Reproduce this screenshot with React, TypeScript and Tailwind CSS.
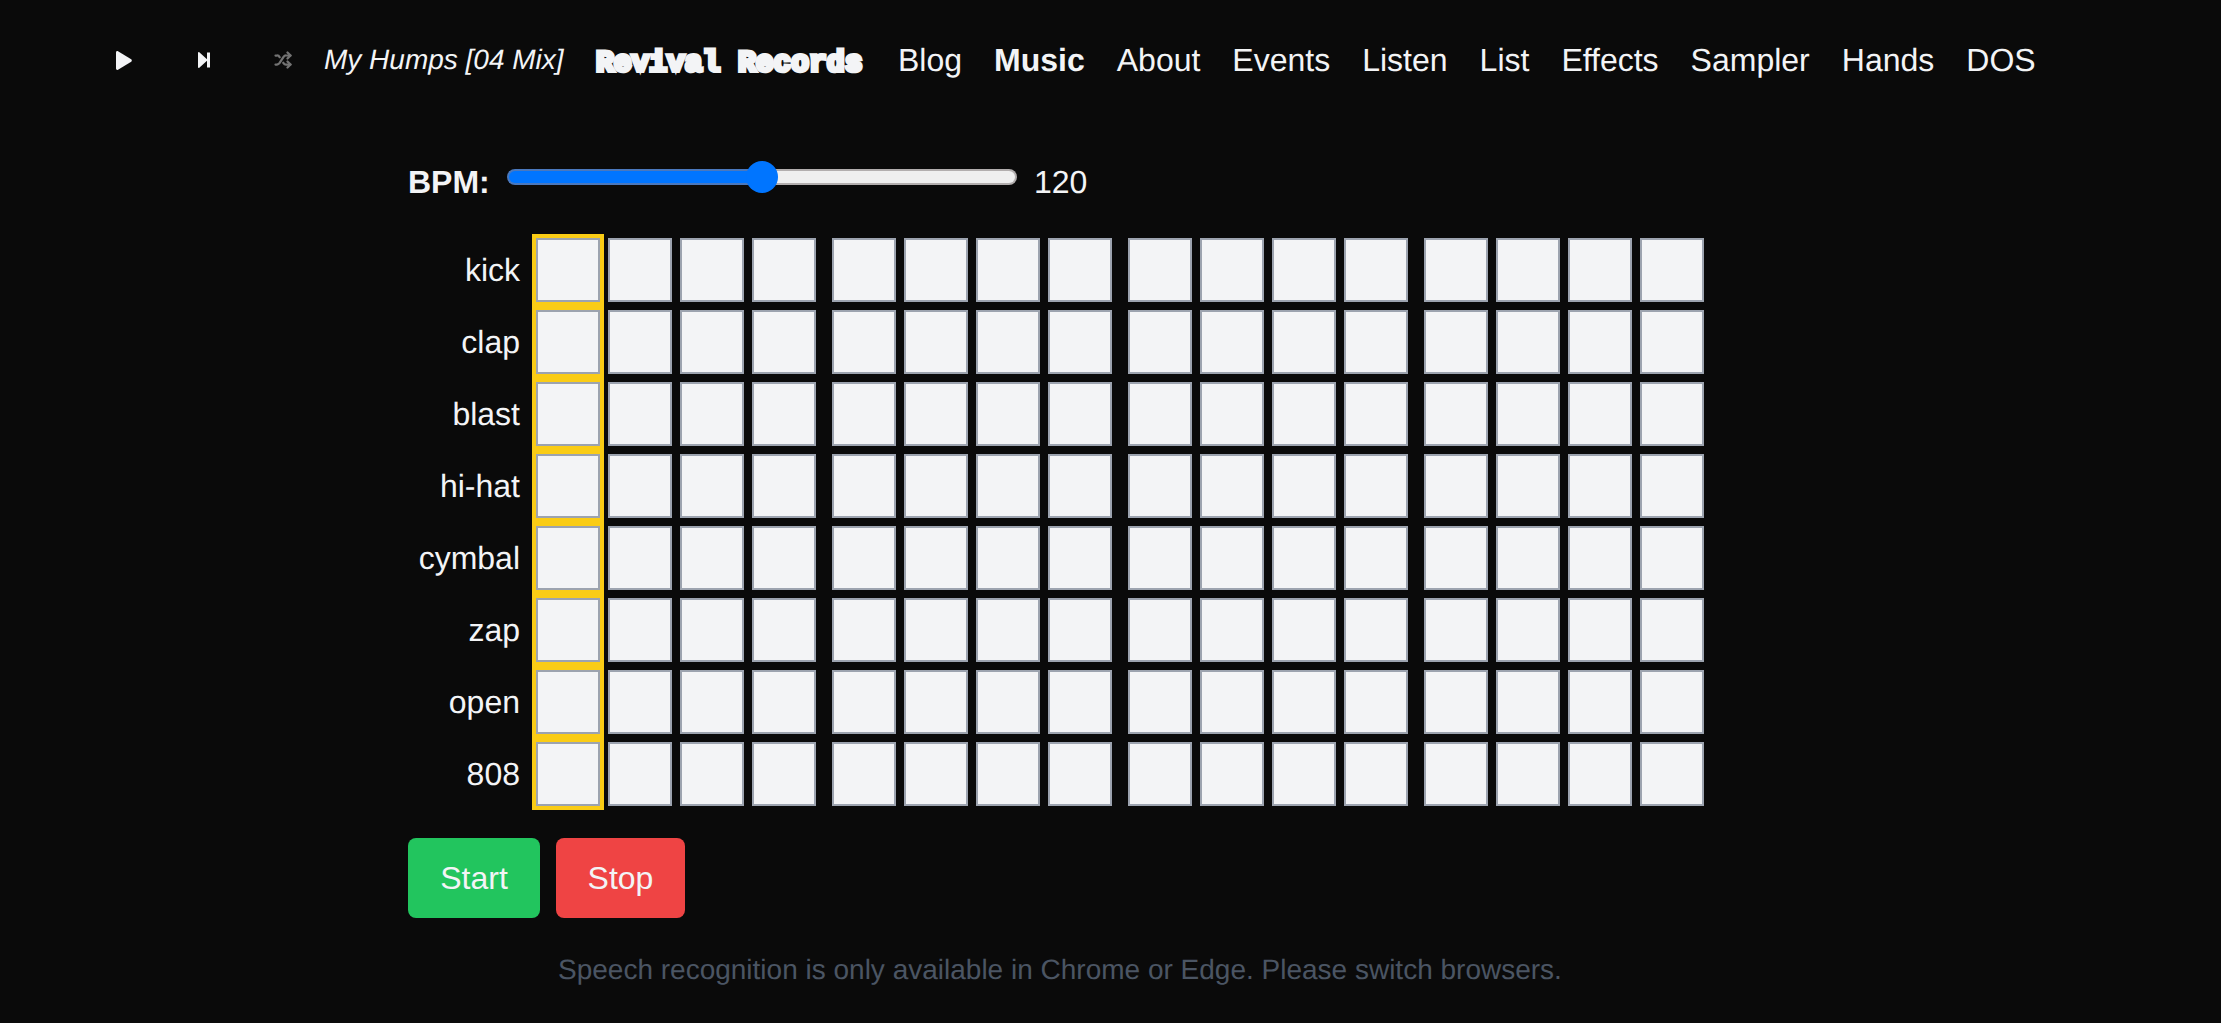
import { Shuffle } from "lucide-react";

const rows = ["kick", "clap", "blast", "hi-hat", "cymbal", "zap", "open", "808"];
const steps = Array.from({ length: 16 }, (_, i) => i);
const links = ["Blog", "Music", "About", "Events", "Listen", "List", "Effects", "Sampler", "Hands", "DOS"];

export default function App() {
  return (
    <div className="min-h-[1023px] bg-[#0a0a0a] text-[#f3f4f6] font-['Liberation_Sans',sans-serif] text-[32px] leading-[48px] [text-rendering:geometricPrecision]">
      <nav className="flex items-center h-[120px] pl-[112px]">
        <button className="flex justify-center w-[24px]">
          <svg viewBox="0 0 16 19" className="w-[16px] h-[19px]" fill="currentColor">
            <path d="M0 1.4C0 .4 1 -.3 2 .3L15.2 8.3C16 8.8 16 10.2 15.2 10.7L2 18.7C1 19.3 0 18.6 0 17.6Z" />
          </svg>
        </button>
        <button className="flex justify-center w-[20px] ml-[58px]">
          <svg viewBox="0 0 12 16" className="w-[12px] h-[16px]" fill="currentColor">
            <path d="M0 1C0 .2.7 -.2 1.3.3L9 7.3V.5H12V15.5H9V8.7L1.3 15.7C.7 16.2 0 15.8 0 15Z" />
          </svg>
        </button>
        <button className="flex justify-center w-[20px] ml-[59px] text-[#737373]">
          <Shuffle className="w-[18px] h-[18px]" strokeWidth={3} />
        </button>
        <span className="ml-[31px] italic font-light text-[28px] w-[240px] whitespace-nowrap">My Humps [04 Mix]</span>
        <span className="ml-[32px] w-[267px] whitespace-nowrap font-['Liberation_Mono'] font-bold text-[29.6px] relative top-[3px] [-webkit-text-stroke:4px_#f3f4f6]">Revival Records</span>
        <div className="flex gap-[32px] ml-[35px]">
          {links.map((l) => (
            <a key={l} className={l === "Music" ? "font-bold" : ""}>{l}</a>
          ))}
        </div>
      </nav>
      <main className="pl-[408px]">
        <div className="flex items-center mt-[38px] h-[32px]">
          <label className="font-bold w-[99px] relative top-[8px]">BPM:</label>
          <div className="flex items-center w-[510px] h-[32px] relative top-[3px]">
            <div className="w-[255px] h-[16px] rounded-l-full bg-[#0075ff] border-2 border-r-0 border-[#4a78bd]" />
            <div className="w-[32px] h-[32px] rounded-full bg-[#0075ff] -mx-[16px] z-10 shrink-0" />
            <div className="flex-1 h-[16px] rounded-r-full bg-[#efefef] border-2 border-l-0 border-[#b2aeae]" />
          </div>
          <span className="ml-[17px] relative top-[8px]">120</span>
        </div>
        <div className="mt-[48px] flex flex-col gap-[8px]">
          {rows.map((r) => (
            <div key={r} className="flex items-center h-[64px]">
              <span className="w-[112px] mr-[16px] text-right">{r}</span>
              {steps.map((s) => (
                <div
                  key={s}
                  className={`w-[64px] h-[64px] border-2 border-[#9ca3af] bg-[#f3f4f6] ${s === 0 ? "ring-4 ring-[#facc15]" : ""} ${s % 4 === 3 ? "mr-[16px]" : "mr-[8px]"}`}
                />
              ))}
            </div>
          ))}
        </div>
        <div className="flex gap-[16px] mt-[32px]">
          <button className="w-[132px] h-[80px] rounded-[8px] bg-[#22c55e]">Start</button>
          <button className="w-[129px] h-[80px] rounded-[8px] bg-[#ef4444]">Stop</button>
        </div>
      </main>
      <p className="mt-[36px] pl-[558px] text-[28px] leading-[32px] text-[#4b5563]">
        Speech recognition is only available in Chrome or Edge. Please switch browsers.
      </p>
    </div>
  );
}
